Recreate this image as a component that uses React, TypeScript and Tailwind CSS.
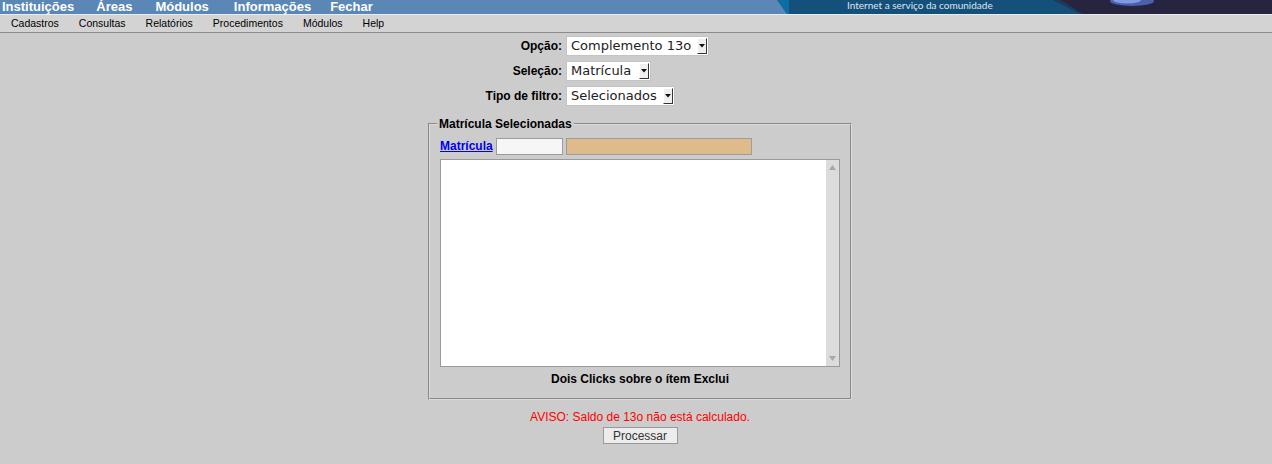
import React from 'react';

const topMenu = [
  { label: 'Instituições', cls: 'ml-[2px]' },
  { label: 'Áreas', cls: 'ml-[22px]' },
  { label: 'Módulos', cls: 'ml-[23px]' },
  { label: 'Informações', cls: 'ml-[25px]' },
  { label: 'Fechar', cls: 'ml-[19px]' },
];
const subMenu = ['Cadastros', 'Consultas', 'Relatórios', 'Procedimentos', 'Módulos', 'Help'];

function FakeSelect({ value, width }: { value: string; width: string }) {
  return (
    <div className={`flex h-[20px] items-center bg-white border border-[#c4c4c4] ${width}`}>
      <span className="flex-1 pl-[4px] text-[13px] leading-[18px] text-[#222] font-['DejaVu_Sans',sans-serif] whitespace-nowrap">
        {value}
      </span>
      <span className="mr-[1px] flex h-[16px] w-[10px] items-center justify-center bg-[#efefef] border-r border-b border-[#333] border-t border-l border-t-white border-l-white">
        <svg width="6" height="4" viewBox="0 0 6 4">
          <path d="M0 0h6L3 3.5z" fill="#111" />
        </svg>
      </span>
    </div>
  );
}

export default function App() {
  return (
    <div className="min-h-screen bg-[#cccccc] font-['Liberation_Sans',Arial,sans-serif] text-black">
      {/* top bar */}
      <div className="flex h-[14px] bg-[#5a87b5] overflow-hidden">
        <div className="flex flex-1">
          {topMenu.map(item => (
            <span key={item.label} className={`text-[13px] font-bold leading-[14px] text-white whitespace-nowrap ${item.cls}`}>
              {item.label}
            </span>
          ))}
        </div>
        <div className="relative w-[495px] h-[14px]">
          <svg className="absolute inset-0" width="495" height="14" viewBox="0 0 495 14">
            <rect width="495" height="14" fill="#15507a" />
            <polygon points="0,0 12,0 12,14 10,14" fill="#0c6ea2" />
            <polygon points="0,0 10,14 0,14" fill="#5a87b5" />
            <polygon points="276,0 495,0 495,14 303,14" fill="#1d3a5c" />
            <polygon points="284,0 495,0 495,14 306,14" fill="#27243f" />
            <ellipse cx="355" cy="1" rx="22" ry="5" fill="#4a5fae" />
            <ellipse cx="350" cy="0" rx="14" ry="3.5" fill="#8498e0" />
          </svg>
          <span className="absolute left-[70px] top-0 text-[10px] leading-[10px] text-[#dde6ee] font-['Lato',sans-serif] whitespace-nowrap">
            Internet a serviço da comunidade
          </span>
        </div>
      </div>

      {/* sub menu */}
      <div className="flex h-[19px] items-center gap-[20px] pl-[11px] bg-[#d3d3d3] border-t border-[#ececec] border-b border-b-[#8a8a8a]">
        {subMenu.map(item => (
          <span key={item} className="text-[10.5px] leading-[17px] text-black whitespace-nowrap">
            {item}
          </span>
        ))}
      </div>

      {/* filters */}
      <div className="mt-[3px] grid grid-cols-[562px_1fr] gap-x-[4px] gap-y-[5px] items-center">
        <label className="text-right text-[12px] font-bold">Opção:</label>
        <FakeSelect value="Complemento 13o" width="w-[143px]" />
        <label className="text-right text-[12px] font-bold">Seleção:</label>
        <FakeSelect value="Matrícula" width="w-[85px]" />
        <label className="text-right text-[12px] font-bold">Tipo de filtro:</label>
        <FakeSelect value="Selecionados" width="w-[109px]" />
      </div>

      <div className="flex flex-col items-center pl-[8px]">
        <fieldset className="mt-[11px] w-[424px] h-[283px] border-2 [border-style:groove] border-[#dcdcdc] pl-[10px] pr-[10px] pb-[6px]">
          <legend className="ml-[-3px] px-[2px] text-[12px] font-bold leading-[14px]">Matrícula Selecionadas</legend>
          <div className="mt-[6px] flex items-center gap-[3px]">
            <a href="#" className="text-[12px] font-bold text-[#0000ee] underline">Matrícula</a>
            <input className="h-[17px] w-[67px] bg-[#f6f6f6] border border-[#9c9c9c] outline-none" />
            <input className="h-[17px] w-[186px] bg-[#dfba8a] border border-[#9c9c9c] outline-none" />
          </div>
          <div className="mt-[4px] flex h-[208px] w-[400px] bg-white border border-[#9a9a9a]">
            <div className="flex-1" />
            <div className="flex w-[13px] flex-col items-center justify-between bg-[#dcdcdc] py-[5px]">
              <svg width="7" height="5" viewBox="0 0 7 5"><path d="M3.5 0L7 5H0z" fill="#a8a8a8" /></svg>
              <svg width="7" height="5" viewBox="0 0 7 5"><path d="M0 0h7L3.5 5z" fill="#a8a8a8" /></svg>
            </div>
          </div>
          <p className="mt-[5px] text-center text-[12px] font-bold leading-[14px]">Dois Clicks sobre o ítem Exclui</p>
        </fieldset>

        <p className="mt-[10px] text-[12px] leading-[14px] text-[#ff0000]">AVISO: Saldo de 13o não está calculado.</p>
        <button className="mt-[3px] h-[17px] w-[75px] bg-[#ececec] border border-[#999] text-[12px] leading-[14px] text-[#333]">
          Processar
        </button>
      </div>
    </div>
  );
}
